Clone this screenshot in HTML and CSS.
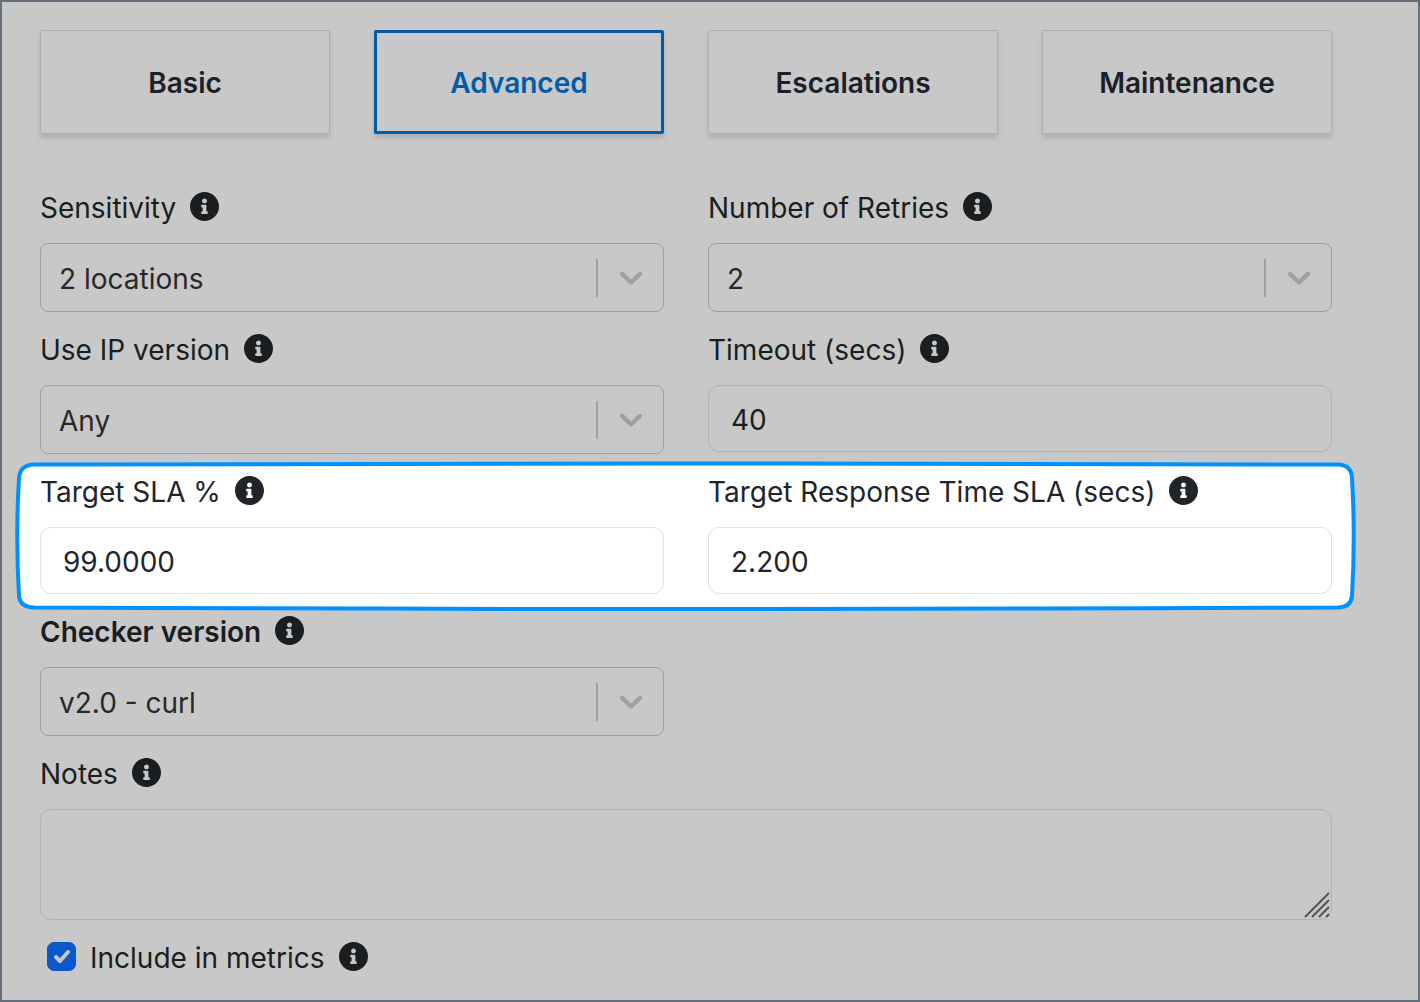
FILE: index.html
```html
<!DOCTYPE html>
<html lang="en">
<head>
    <meta charset="UTF-8">
    <meta name="viewport" content="width=device-width, initial-scale=1.0">
    <title>Check Settings</title>
    <link rel="stylesheet" href="styles.css">
</head>
<body>

    <!-- Shared icons -->
    <svg class="sprite" aria-hidden="true">
        <symbol id="info" viewBox="8 8 496 496">
            <path d="M256 8C119 8 8 119 8 256s111 248 248 248 248-111 248-248S393 8 256 8zm0 110c23.200 0 42 18.800 42 42s-18.800 42-42 42-42-18.800-42-42 18.800-42 42-42zm56 254c0 6.600-5.400 12-12 12h-88c-6.600 0-12-5.400-12-12v-24c0-6.600 5.400-12 12-12h12v-64h-12c-6.600 0-12-5.400-12-12v-24c0-6.600 5.400-12 12-12h64c6.600 0 12 5.400 12 12v100h12c6.600 0 12 5.400 12 12v24z"/>
        </symbol>
        <symbol id="chevron" viewBox="0 0 20 20">
            <path d="M4.516 7.548c0.436-0.446 1.043-0.481 1.576 0l3.908 3.747 3.908-3.747c0.533-0.481 1.141-0.446 1.574 0 0.436 0.445 0.408 1.197 0 1.615-0.406 0.418-4.695 4.502-4.695 4.502-0.217 0.223-0.502 0.335-0.787 0.335s-0.570-0.112-0.789-0.335c0 0-4.287-4.084-4.695-4.502s-0.436-1.170 0-1.615z"/>
        </symbol>
    </svg>

    <main class="panel">
        <nav class="tabs">
            <button class="tab" type="button">Basic</button>
            <button class="tab active" type="button">Advanced</button>
            <button class="tab" type="button">Escalations</button>
            <button class="tab" type="button">Maintenance</button>
        </nav>

        <form class="form">
            <div class="row">
                <div class="field">
                    <div class="label-line">
                        <label for="sensitivity">Sensitivity</label>
                        <svg class="info"><use href="#info"/></svg>
                    </div>
                    <div class="select">
                        <select id="sensitivity">
                            <option>2 locations</option>
                        </select>
                        <svg class="chevron"><use href="#chevron"/></svg>
                    </div>
                </div>
                <div class="field">
                    <div class="label-line">
                        <label for="retries">Number of Retries</label>
                        <svg class="info"><use href="#info"/></svg>
                    </div>
                    <div class="select">
                        <select id="retries">
                            <option>2</option>
                        </select>
                        <svg class="chevron"><use href="#chevron"/></svg>
                    </div>
                </div>
            </div>

            <div class="row">
                <div class="field">
                    <div class="label-line">
                        <label for="ipVersion">Use IP version</label>
                        <svg class="info"><use href="#info"/></svg>
                    </div>
                    <div class="select">
                        <select id="ipVersion">
                            <option>Any</option>
                        </select>
                        <svg class="chevron"><use href="#chevron"/></svg>
                    </div>
                </div>
                <div class="field">
                    <div class="label-line">
                        <label for="timeout">Timeout (secs)</label>
                        <svg class="info"><use href="#info"/></svg>
                    </div>
                    <input class="text-input" type="text" id="timeout" value="40">
                </div>
            </div>

            <!-- Highlighted SLA settings -->
            <div class="row spotlight">
                <svg class="spotlight-frame" viewBox="0 0 1344 152" preserveAspectRatio="none" aria-hidden="true">
                    <path d="M20 4.500Q672 2.500 1324 4.500Q1337.500 5 1338 18Q1341.500 76 1338 136Q1337 147 1324 147.500Q672 150.500 20 147.500Q6 147 5 136Q1.500 76 5 18Q6 5 20 4.500Z"/>
                </svg>
                <div class="field">
                    <div class="label-line">
                        <label for="targetSla">Target SLA %</label>
                        <svg class="info"><use href="#info"/></svg>
                    </div>
                    <input class="text-input" type="text" id="targetSla" value="99.0000">
                </div>
                <div class="field">
                    <div class="label-line">
                        <label for="responseSla">Target Response Time SLA (secs)</label>
                        <svg class="info"><use href="#info"/></svg>
                    </div>
                    <input class="text-input" type="text" id="responseSla" value="2.200">
                </div>
            </div>

            <div class="row">
                <div class="field">
                    <div class="label-line">
                        <label class="strong" for="checker">Checker version</label>
                        <svg class="info"><use href="#info"/></svg>
                    </div>
                    <div class="select">
                        <select id="checker">
                            <option>v2.0 - curl</option>
                        </select>
                        <svg class="chevron"><use href="#chevron"/></svg>
                    </div>
                </div>
            </div>

            <div class="field">
                <div class="label-line">
                    <label for="notes">Notes</label>
                    <svg class="info"><use href="#info"/></svg>
                </div>
                <div class="notes">
                    <textarea id="notes"></textarea>
                    <svg class="grip" viewBox="0 0 26 26" aria-hidden="true">
                        <path d="M1 25L25 1M8 25L25 8M15 25L25 15M22 25L25 22"/>
                    </svg>
                </div>
            </div>

            <div class="label-line metrics">
                <span class="check">
                    <input type="checkbox" id="metrics" checked>
                    <svg viewBox="0 0 29 29" aria-hidden="true"><path d="M9 15L13 19L21 10"/></svg>
                </span>
                <label for="metrics">Include in metrics</label>
                <svg class="info"><use href="#info"/></svg>
            </div>
        </form>
    </main>

</body>
</html>
```
FILE: styles.css
```css
* {
    box-sizing: border-box;
}
body {
    margin: 0;
    padding: 2px;
    background: #656f7b;
    font-family: Inter, "Liberation Sans", sans-serif;
    font-size: 28px;
    color: #1a1e21;
}
button, input, select, textarea {
    font: inherit;
    color: inherit;
}
.sprite {
    display: none;
}
.panel {
    min-height: calc(100vh - 4px);
    padding: 28px 86px 20px 38px;
    background: #c8c8c8;
}

/* Tabs */
.tabs {
    display: grid;
    grid-template-columns: repeat(4, 1fr);
    gap: 44px;
    margin-bottom: 53px;
}
.tab {
    height: 104px;
    padding: 2px 0 0;
    background: #c8c8c8;
    border: 1px solid #adb0b1;
    border-radius: 2px;
    box-shadow: 0 4px 5px rgba(60, 80, 75, 0.18);
    font-weight: 600;
    color: #1a212a;
    cursor: pointer;
}
.tab.active {
    border: 3px solid #005ca6;
    color: #005ca6;
}

/* Form */
.form {
    display: flex;
    flex-direction: column;
    gap: 17px;
}
.row {
    display: grid;
    grid-template-columns: 1fr 1fr;
    gap: 44px;
    align-items: start;
}
.label-line {
    display: flex;
    align-items: center;
    gap: 14px;
    height: 42px;
}
.field .label-line {
    margin-bottom: 14px;
}
.strong {
    font-weight: 600;
}
.info {
    width: 29px;
    height: 29px;
    margin-bottom: 4px;
    fill: currentColor;
}
.text-input {
    display: block;
    width: 100%;
    height: 67px;
    padding: 2px 22px 0;
    background: transparent;
    border: 1px solid #b0b2b3;
    border-radius: 11px;
}
.select {
    position: relative;
}
.select select {
    display: block;
    width: 100%;
    height: 69px;
    padding: 2px 80px 0 18px;
    appearance: none;
    background: transparent;
    border: 1px solid #9f9f9f;
    border-radius: 8px;
    color: #282828;
}
.select::after {
    content: "";
    position: absolute;
    top: 16px;
    bottom: 15px;
    right: 66px;
    width: 2px;
    background: #a0a0a0;
}
.chevron {
    position: absolute;
    top: 15px;
    right: 14px;
    width: 38px;
    height: 38px;
    fill: #a0a0a0;
    pointer-events: none;
}

/* Spotlight */
.spotlight {
    position: relative;
    color: #212529;
}
.spotlight .field {
    position: relative;
}
.spotlight-frame {
    position: absolute;
    top: -11px;
    left: -26px;
    width: calc(100% + 52px);
    height: calc(100% + 29px);
    fill: #fff;
    stroke: #0090ff;
    stroke-width: 4px;
}
.spotlight .text-input {
    border-color: #dee2e3;
}

/* Notes */
.notes {
    position: relative;
}
.notes textarea {
    display: block;
    width: 100%;
    height: 111px;
    padding: 12px 22px;
    background: transparent;
    border: 1px solid #b0b2b3;
    border-radius: 11px;
    resize: none;
}
.grip {
    position: absolute;
    right: 2px;
    bottom: 2px;
    width: 26px;
    height: 26px;
    stroke: #555;
    stroke-width: 2px;
    pointer-events: none;
}

/* Checkbox */
.metrics {
    padding-left: 7px;
}
.check {
    position: relative;
    width: 29px;
    height: 29px;
    margin-bottom: 4px;
}
.check input {
    display: block;
    width: 29px;
    height: 29px;
    margin: 0;
    appearance: none;
    background: #c8c8c8;
    border: 1px solid #0a58ca;
    border-radius: 7px;
}
.check input:checked {
    background: #0a58ca;
}
.check svg {
    position: absolute;
    top: 0;
    left: 0;
    width: 29px;
    height: 29px;
    fill: none;
    stroke: #c8c8c8;
    stroke-width: 4px;
    stroke-linecap: round;
    stroke-linejoin: round;
    pointer-events: none;
}
```
